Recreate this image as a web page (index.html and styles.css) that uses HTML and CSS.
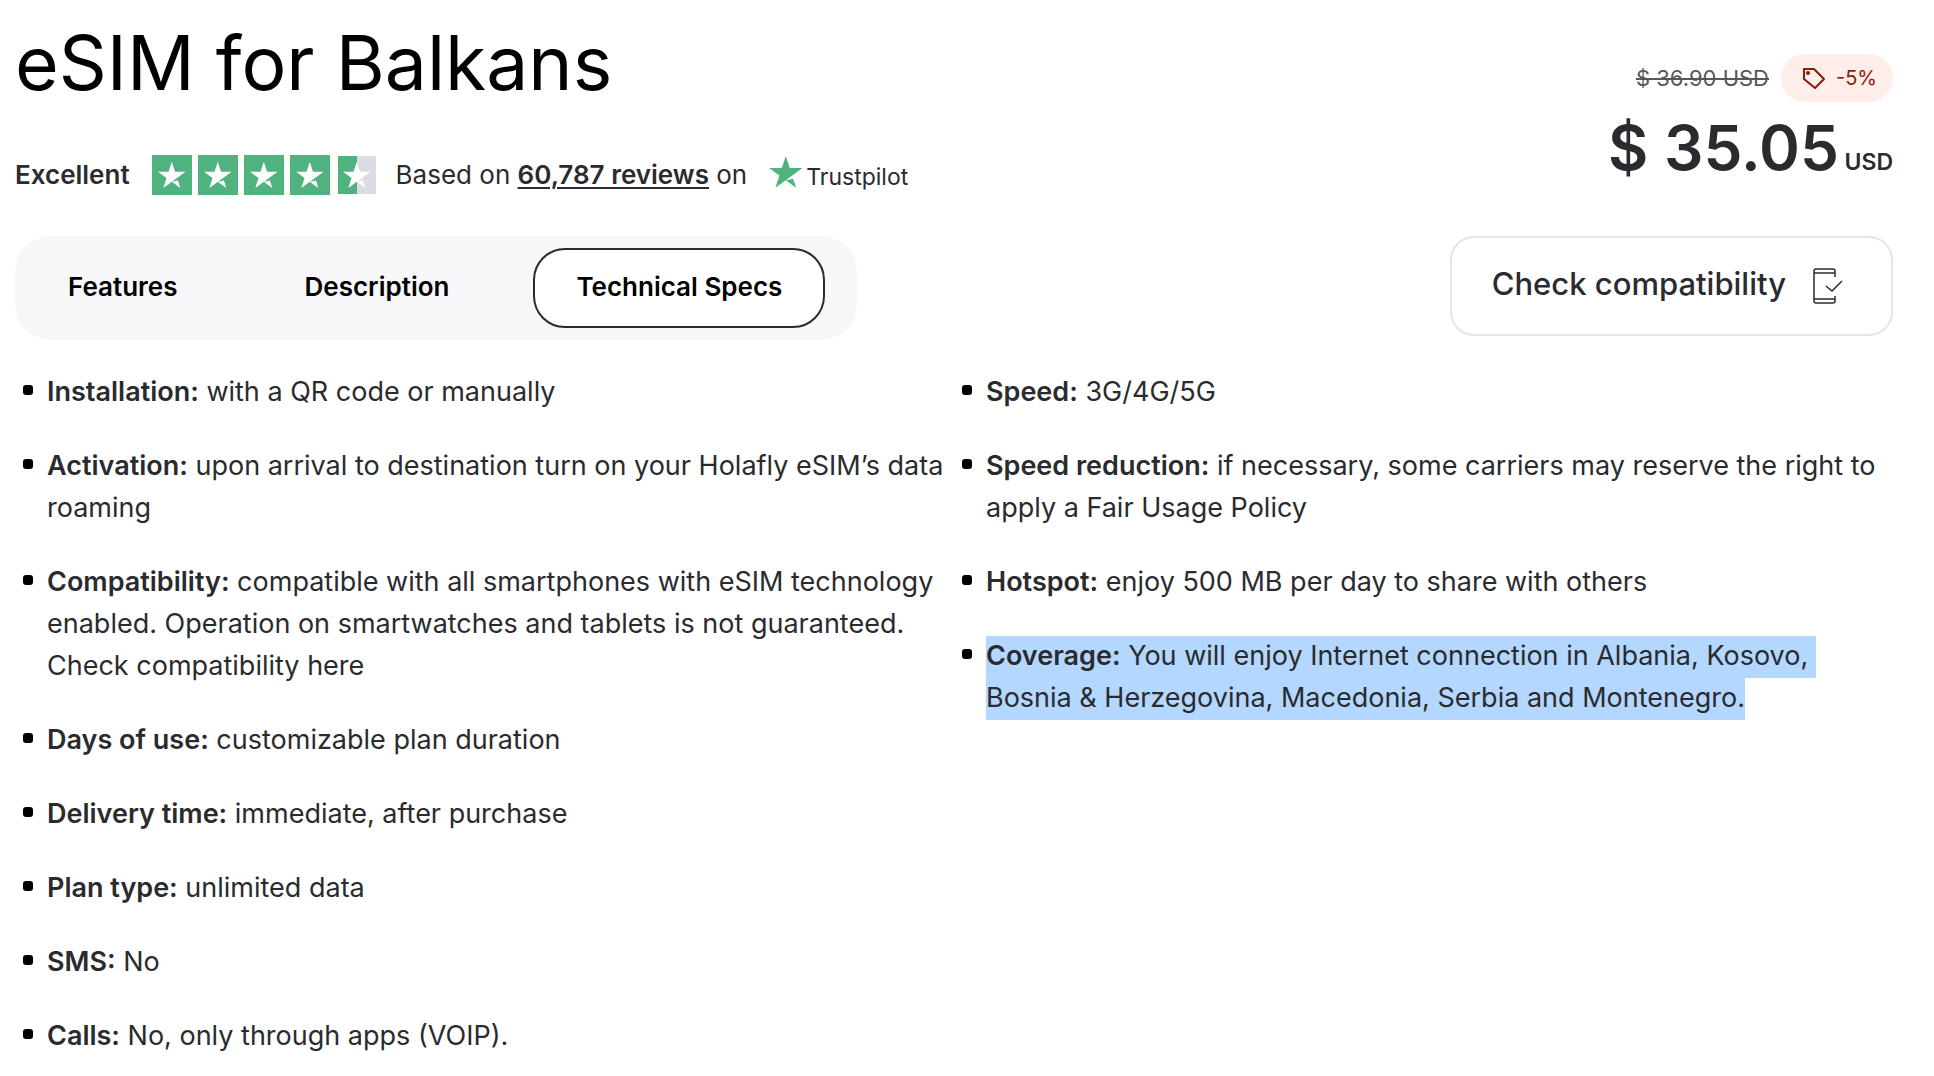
FILE: index.html
```html
<!DOCTYPE html>
<html lang="en">
<head>
<meta charset="utf-8">
<meta name="viewport" content="width=device-width, initial-scale=1">
<title>eSIM for Balkans</title>
<link rel="stylesheet" href="styles.css">
</head>
<body>
<svg class="defs" aria-hidden="true">
  <symbol id="star" viewBox="7 7 33 33">
    <path d="M39.534 19.711L13.23 38.801l3.838-11.798L7.021 19.711H19.44l3.837-11.798 3.838 11.798zM23.278 31.51l7.184-1.51 2.862 8.8z"/>
  </symbol>
</svg>
<main class="product">
  <header class="summary">
    <div class="intro">
      <h1 class="title">eSIM for Balkans</h1>
      <div class="rating">
        <strong class="grade">Excellent</strong>
        <div class="stars" role="img" aria-label="4.5 out of 5 stars">
          <span class="star"><svg><use href="#star"/></svg></span>
          <span class="star"><svg><use href="#star"/></svg></span>
          <span class="star"><svg><use href="#star"/></svg></span>
          <span class="star"><svg><use href="#star"/></svg></span>
          <span class="star star-half"><svg><use href="#star"/></svg></span>
        </div>
        <p class="reviews">Based on <a href="#reviews">60,787 reviews</a> on</p>
        <div class="trustpilot"><svg class="trust-star"><use href="#star"/></svg><span class="trust-name">Trustpilot</span></div>
      </div>
    </div>
    <div class="pricing">
      <div class="discount">
        <s class="old-price">$ 36.90 USD</s>
        <span class="badge">
          <svg class="tag" viewBox="0 0 24 24" aria-hidden="true"><path d="M2 3h10l10 10-9 9L2 13z"/><circle cx="6" cy="7" r="1"/></svg>
          -5%
        </span>
      </div>
      <div class="price">$ 35.05 <span class="currency">USD</span></div>
    </div>
  </header>

  <div class="actions">
    <nav class="tabs">
      <button class="tab" type="button">Features</button>
      <button class="tab" type="button">Description</button>
      <button class="tab tab-active" type="button">Technical Specs</button>
    </nav>
    <button class="check" type="button">
      <span class="check-label">Check compatibility</span>
      <svg class="phone" viewBox="0 0 30 36" aria-hidden="true"><path d="M22 9V3q0-2-2-2H3Q1 1 1 3v30q0 2 2 2h17q2 0 2-2v-5M1 5h21M1 31h21M13 18l6 5 10-10"/></svg>
    </button>
  </div>

  <section class="specs">
    <ul class="spec-list">
      <li><p><b>Installation:</b> with a QR code or manually</p></li>
      <li><p><b>Activation:</b> upon arrival to destination turn on your Holafly eSIM’s data roaming</p></li>
      <li><p><b>Compatibility:</b> compatible with all smartphones with eSIM technology enabled. Operation on smartwatches and tablets is not guaranteed. Check compatibility here</p></li>
      <li><p><b>Days of use:</b> customizable plan duration</p></li>
      <li><p><b>Delivery time:</b> immediate, after purchase</p></li>
      <li><p><b>Plan type:</b> unlimited data</p></li>
      <li><p><b>SMS:</b> No</p></li>
      <li><p><b>Calls:</b> No, only through apps (VOIP).</p></li>
    </ul>
    <ul class="spec-list">
      <li><p><b>Speed:</b> 3G/4G/5G</p></li>
      <li><p><b>Speed reduction:</b> if necessary, some carriers may reserve the right to apply a Fair Usage Policy</p></li>
      <li><p><b>Hotspot:</b> enjoy 500 MB per day to share with others</p></li>
      <li><p><span class="selected"><b>Coverage:</b> You will enjoy Internet connection in Albania, Kosovo,&nbsp;<br>Bosnia &amp; Herzegovina, Macedonia, Serbia and Montenegro.</span></p></li>
    </ul>
  </section>
</main>
</body>
</html>
```
FILE: styles.css
```css
* {
  box-sizing: border-box;
}

body {
  margin: 0;
  background: #fff;
  color: #2a2b2f;
  font-family: Inter, "Liberation Sans", sans-serif;
  font-size: 27px;
  line-height: 42px;
}

h1, p, ul {
  margin: 0;
  padding: 0;
}

button {
  font-family: inherit;
  cursor: pointer;
}

b {
  font-weight: 600;
}

.defs {
  display: none;
}

.product {
  padding: 15px 41px 16px 15px;
}

.summary,
.actions {
  display: flex;
  justify-content: space-between;
  align-items: flex-start;
}

/* Title and rating */
.title {
  color: #000;
  font-size: 75px;
  font-weight: 400;
  line-height: 96px;
}

.rating {
  display: flex;
  align-items: center;
  height: 40px;
  margin-top: 44px;
  font-size: 26px;
}

.grade {
  font-weight: 600;
}

.stars {
  display: flex;
  gap: 6px;
  margin: 0 20px 0 22px;
}

.star {
  display: flex;
  align-items: center;
  justify-content: center;
  width: 40px;
  height: 40px;
  background: #50b27f;
  fill: #fff;
}

.star svg {
  width: 28px;
  height: 28px;
}

.star-half {
  align-self: center;
  width: 38px;
  height: 38px;
  margin-left: 2px;
  background: linear-gradient(to right, #50b27f 50%, #dcdce6 50%);
}

.reviews a {
  color: inherit;
  font-weight: 600;
  text-decoration-thickness: 2px;
  text-underline-offset: 3px;
}

.trustpilot {
  display: flex;
  align-items: center;
  gap: 3px;
  margin-left: 22px;
}

.trust-star {
  width: 34px;
  height: 34px;
  margin-bottom: 6px;
  fill: #50b27f;
}

.trust-name {
  padding-top: 4px;
  font-size: 23px;
}

/* Price */
.pricing {
  display: flex;
  flex-direction: column;
  align-items: flex-end;
  padding-top: 39px;
}

.discount {
  display: flex;
  align-items: center;
  gap: 12px;
}

.old-price {
  color: #56575b;
  font-size: 22px;
  text-decoration-thickness: 2px;
}

.badge {
  display: flex;
  align-items: center;
  gap: 10px;
  height: 48px;
  padding: 0 16px 0 21px;
  border-radius: 24px;
  background: #ffedea;
  color: #8c1c06;
  font-size: 20px;
}

.tag {
  width: 24px;
  height: 24px;
  fill: none;
  stroke: currentColor;
  stroke-width: 2;
  stroke-linejoin: round;
}

.price {
  margin-top: 16px;
  font-size: 62px;
  font-weight: 600;
  line-height: 60px;
  white-space: nowrap;
}

.currency {
  margin-left: -10px;
  font-size: 23px;
}

/* Tabs and compatibility button */
.actions {
  margin-top: 41px;
}

.tabs {
  display: flex;
  gap: 41px;
  padding: 12px 32px 12px 10px;
  border-radius: 36px;
  background: #f7f7fa;
}

.tab {
  height: 80px;
  padding: 0 41px 3px;
  border: 2px solid transparent;
  border-radius: 32px;
  background: transparent;
  color: #000;
  font-size: 26px;
  font-weight: 600;
}

.tab-active {
  border-color: #2a2b2f;
  background: #fff;
}

.check {
  display: flex;
  align-items: center;
  gap: 27px;
  height: 100px;
  padding: 0 48px 0 40px;
  border: 2px solid #e4e4eb;
  border-radius: 24px;
  background: #fff;
  color: #2a2b2f;
  font-size: 31px;
  font-weight: 500;
}

.check-label {
  padding-bottom: 5px;
}

.phone {
  width: 30px;
  height: 36px;
  fill: none;
  stroke: currentColor;
  stroke-width: 1.5;
}

/* Specifications */
.specs {
  display: grid;
  grid-template-columns: 1fr 1fr;
  margin-top: 31px;
}

.spec-list {
  display: flex;
  flex-direction: column;
  gap: 32px;
  list-style: none;
}

.spec-list li {
  display: flex;
}

.spec-list li::before {
  content: "";
  flex: none;
  width: 10px;
  height: 10px;
  margin: 14px 14px 0 8px;
  border-radius: 3px;
  background: #000;
}

.selected {
  padding: 3px 0 6px;
  background: #b3d7ff;
}
```
